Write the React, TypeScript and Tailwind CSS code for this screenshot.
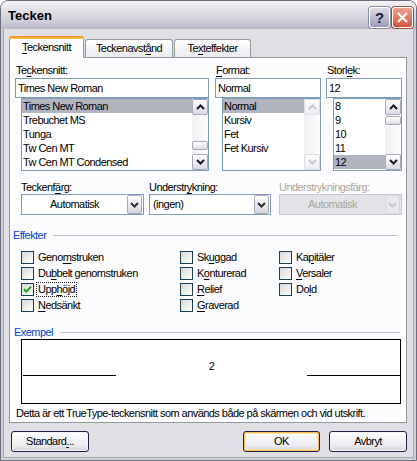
import React from "react";

const FONT = "font-['Liberation_Sans',Arial,sans-serif]";

function U({ c }: { c: string }) {
  return <span className="underline underline-offset-[2px] decoration-[1px]">{c}</span>;
}

function Chev({ up, color = "#1a1a2a" }: { up?: boolean; color?: string }) {
  return (
    <svg width="9" height="6" viewBox="0 0 9 6">
      <path
        d={up ? "M1 5 L4.5 1.5 L8 5" : "M1 1 L4.5 4.5 L8 1"}
        fill="none"
        stroke={color}
        strokeWidth="2"
      />
    </svg>
  );
}

function SBtn({ up, disabled }: { up?: boolean; disabled?: boolean }) {
  return (
    <div
      className={`h-[16px] w-[16px] shrink-0 rounded-[2px] border flex items-center justify-center ${
        disabled
          ? "border-[#dcdce2] bg-[linear-gradient(to_bottom,#fbfbfc,#eeeef2)]"
          : "border-[#a9a9bb] bg-[linear-gradient(to_bottom,#ffffff,#dadae4)]"
      }`}
    >
      <Chev up={up} color={disabled ? "#c6c6d0" : "#1a1a2a"} />
    </div>
  );
}

function Scroll({ thumbTop, disabled }: { thumbTop?: number; disabled?: boolean }) {
  return (
    <div className="w-[16px] h-full flex flex-col bg-[linear-gradient(to_right,#f1f1f4,#fcfcfe)]">
      <SBtn up disabled={disabled} />
      {thumbTop !== undefined ? (
        <>
          <div style={{ height: thumbTop }} />
          <div className="h-[9px] w-[16px] rounded-[2px] border border-[#a9a9bb] bg-[linear-gradient(to_bottom,#ffffff,#dcdce6)]" />
        </>
      ) : null}
      <div className="flex-1" />
      <SBtn disabled={disabled} />
    </div>
  );
}

function ListBox({
  items,
  sel,
  thumbTop,
  disabled,
}: {
  items: string[];
  sel: number;
  thumbTop?: number;
  disabled?: boolean;
}) {
  return (
    <div className="h-[73px] border border-[#7f9db9] bg-white flex p-0">
      <div className="flex-1 flex flex-col overflow-hidden">
        {items.map((it, i) => (
          <div
            key={it}
            className={`h-[14px] leading-[14px] pl-[1px] whitespace-nowrap ${
              i === sel ? "bg-[#b2b4bf]" : ""
            }`}
          >
            {it}
          </div>
        ))}
      </div>
      <Scroll thumbTop={thumbTop} disabled={disabled} />
    </div>
  );
}

function Combo({
  text,
  center,
  disabled,
}: {
  text: string;
  center?: boolean;
  disabled?: boolean;
}) {
  return (
    <div
      className={`h-[21px] border flex items-center ${
        disabled
          ? "border-[#c9c7d0] bg-[#e4e3e8] text-[#aca899]"
          : "border-[#7f9db9] bg-white"
      }`}
    >
      <span className={`flex-1 px-[3px] whitespace-nowrap ${center ? "text-center" : ""}`}>
        {text}
      </span>
      <div
        className={`h-[19px] w-[15px] mr-px rounded-[2px] border flex items-center justify-center ${
          disabled
            ? "border-[#d8d8de] bg-[#e8e8ec]"
            : "border-[#a9a9bb] bg-[linear-gradient(to_bottom,#ffffff,#d4d4de)]"
        }`}
      >
        <Chev color={disabled ? "#c8c8d0" : "#2a2a3a"} />
      </div>
    </div>
  );
}

function Check({
  children,
  checked,
  focus,
}: {
  children: React.ReactNode;
  checked?: boolean;
  focus?: boolean;
}) {
  return (
    <div className="h-[16px] flex items-center">
      <span className="w-[13px] h-[13px] shrink-0 border border-[#1c3f5a] bg-[linear-gradient(135deg,#d8d8d4,#ffffff)] flex items-center justify-center">
        {checked ? (
          <svg width="9" height="9" viewBox="0 0 9 9">
            <path d="M1 4.2 L3.3 6.6 L8 1.8" fill="none" stroke="#21a121" strokeWidth="2" />
          </svg>
        ) : null}
      </span>
      <span
        className={`ml-[2px] leading-[13px] px-[1px] whitespace-nowrap border ${
          focus ? "border-dotted border-[#222]" : "border-transparent"
        }`}
      >
        {children}
      </span>
    </div>
  );
}

function Btn({ children, def, w }: { children: React.ReactNode; def?: boolean; w: string }) {
  return (
    <div
      className={`${w} h-[21px] rounded-[3px] border border-[#20204a] bg-[linear-gradient(to_bottom,#ffffff,#ececf0_70%,#d2d2dc)] flex items-center justify-center ${
        def ? "shadow-[inset_0_0_0_1px_#f7c05a,inset_0_0_0_2px_#fde6a6]" : "shadow-[inset_0_0_0_1px_#f4f4f8]"
      }`}
    >
      {children}
    </div>
  );
}

export default function App() {
  return (
    <div className={`w-[417px] h-[461px] bg-white text-[11px] text-black tracking-[-0.55px] ${FONT}`}>
      <div className="w-[417px] h-[461px] rounded-t-[8px] border border-[#6e6e82] bg-[#cfcfd9] flex flex-col overflow-hidden">
        {/* Title bar */}
        <div className="h-[28px] shrink-0 flex items-center bg-[linear-gradient(to_bottom,#f4f4f6_0%,#e2e2e8_30%,#d0d0da_70%,#b8b8c8_100%)]">
          <span className="ml-[7px] mt-[2px] text-[13px] font-bold tracking-[0px]">Tecken</span>
          <div className="flex-1" />
          <div className="w-[21px] h-[21px] mt-[4px] rounded-[3px] border border-white bg-[linear-gradient(to_bottom,#dcdce8,#9a9ab6)] flex items-center justify-center shadow-[0_0_0_1px_#8a8aa0]">
            <span className="text-[15px] font-bold text-[#1a1a3a] leading-none tracking-[0px]">?</span>
          </div>
          <div className="w-[21px] h-[21px] mt-[4px] ml-[2px] mr-[3px] rounded-[3px] border border-white bg-[linear-gradient(to_bottom,#f0a392,#d2523f)] flex items-center justify-center shadow-[0_0_0_1px_#a04a40]">
            <svg width="13" height="13" viewBox="0 0 13 13">
              <path d="M2 2 L11 11 M11 2 L2 11" stroke="#ffffff" strokeWidth="2.2" />
            </svg>
          </div>
        </div>

        {/* Body */}
        <div className="flex-1 mx-[2px] mb-[2px] border-x border-b border-[#a8a8b8] bg-[#e0dfe3] flex flex-col">
          {/* Tabs */}
          <div className="mt-[7px] ml-[5px] h-[21px] flex items-end relative z-10">
            <div className="w-[75px] h-[22px] mb-[-1px] rounded-t-[3px] border-x border-[#919b9c] bg-[#fcfcfe] flex flex-col">
              <div className="h-[3px] rounded-t-[3px] bg-[linear-gradient(to_bottom,#e68b2c,#ffc73c)] -mx-px" />
              <div className="flex-1 flex items-center justify-center pb-[3px]">
                <span>
                  <U c="T" />
                  eckensnitt
                </span>
              </div>
            </div>
            <div className="w-[88px] h-[18px] ml-px rounded-t-[3px] border border-b-0 border-[#919b9c] bg-[linear-gradient(to_bottom,#ffffff,#ebebf0)] flex items-center justify-center">
              <span>
                Teckenavst
                <U c="å" />
                nd
              </span>
            </div>
            <div className="w-[77px] h-[18px] ml-[1px] rounded-t-[3px] border border-b-0 border-[#919b9c] bg-[linear-gradient(to_bottom,#ffffff,#ebebf0)] flex items-center justify-center">
              <span>
                Te
                <U c="x" />
                teffekter
              </span>
            </div>
          </div>

          {/* Panel */}
          <div className="ml-[5px] w-[398px] h-[366px] shrink-0 border border-[#919b9c] bg-[#fcfcfe] flex flex-col">
            {/* Font/format/size */}
            <div className="mt-[6px] pl-[5px] flex">
              <div className="w-[194px] flex flex-col">
                <div className="h-[13px] leading-[13px] pl-[1px]">
                  Te
                  <U c="c" />
                  kensnitt:
                </div>
                <div className="mt-[1px] h-[20px] border border-[#7f9db9] bg-white flex items-center pl-[2px]">
                  Times New Roman
                </div>
                <div className="ml-[6px]">
                  <ListBox
                    items={["Times New Roman", "Trebuchet MS", "Tunga", "Tw Cen MT", "Tw Cen MT Condensed"]}
                    sel={0}
                    thumbTop={26}
                  />
                </div>
              </div>
              <div className="w-[106px] ml-[6px] flex flex-col">
                <div className="h-[13px] leading-[13px] pl-[1px]">
                  <U c="F" />
                  ormat:
                </div>
                <div className="mt-[1px] h-[20px] border border-[#7f9db9] bg-white flex items-center pl-[2px]">
                  Normal
                </div>
                <div className="ml-[7px]">
                  <ListBox items={["Normal", "Kursiv", "Fet", "Fet Kursiv"]} sel={0} disabled />
                </div>
              </div>
              <div className="w-[76px] ml-[5px] flex flex-col">
                <div className="h-[13px] leading-[13px] pl-[1px]">
                  Storl
                  <U c="e" />
                  k:
                </div>
                <div className="mt-[1px] h-[20px] border border-[#7f9db9] bg-white flex items-center pl-[2px]">
                  12
                </div>
                <div className="ml-[7px]">
                  <ListBox items={["8", "9", "10", "11", "12"]} sel={4} thumbTop={1} />
                </div>
              </div>
            </div>

            {/* Colors / underline */}
            <div className="mt-[10px] pl-[11px] flex">
              <div className="w-[123px] flex flex-col">
                <div className="h-[13px] leading-[13px]">
                  Teckenf
                  <U c="ä" />
                  rg:
                </div>
                <Combo text="Automatisk" center />
              </div>
              <div className="w-[122px] ml-[5px] flex flex-col">
                <div className="h-[13px] leading-[13px]">
                  Understr
                  <U c="y" />
                  kning:
                </div>
                <Combo text="(ingen)" />
              </div>
              <div className="w-[123px] ml-[8px] flex flex-col">
                <div className="h-[13px] leading-[13px] text-[#aca899]">Understrykningsfärg:</div>
                <Combo text="Automatisk" center disabled />
              </div>
            </div>

            {/* Effekter */}
            <div className="mt-[14px] pl-[3px] pr-[8px] flex items-center h-[13px]">
              <span className="text-[#0046d5] leading-[13px]">Effekter</span>
              <div className="flex-1 ml-[7px] h-px bg-[#c0c0c8]" />
            </div>
            <div className="mt-[7px] pl-[11px] flex">
              <div className="w-[159px] flex flex-col">
                <Check>
                  Geno<U c="m" />struken
                </Check>
                <Check>
                  Du<U c="b" />belt genomstruken
                </Check>
                <Check checked focus>
                  Upp<U c="h" />öjd
                </Check>
                <Check>
                  <U c="N" />edsänkt
                </Check>
              </div>
              <div className="w-[99px] flex flex-col">
                <Check>
                  Sk<U c="u" />ggad
                </Check>
                <Check>
                  K<U c="o" />nturerad
                </Check>
                <Check>
                  <U c="R" />elief
                </Check>
                <Check>
                  <U c="G" />raverad
                </Check>
              </div>
              <div className="flex flex-col">
                <Check>
                  Ka<U c="p" />itäler
                </Check>
                <Check>
                  <U c="V" />ersaler
                </Check>
                <Check>
                  Do<U c="l" />d
                </Check>
              </div>
            </div>

            {/* Exempel */}
            <div className="mt-[13px] pl-[4px] pr-[6px] flex items-center h-[12px]">
              <span className="text-[#0046d5] leading-[12px]">Exempel</span>
              <div className="flex-1 ml-[7px] h-px bg-[#c0c0c8]" />
            </div>
            <div className="mt-[1px] ml-[11px] w-[380px] h-[65px] border border-black bg-white flex flex-col">
              <div className="mt-[20px] h-[16px] flex items-end">
                <div className="ml-px w-[93px] h-px bg-black" />
                <div className="flex-1 text-center leading-[13px] mb-[3px]">2</div>
                <div className="w-[93px] h-px bg-black" />
              </div>
            </div>
            <div className="mt-[3px] pl-[6px] h-[13px] leading-[13px] whitespace-nowrap">
              Detta är ett TrueType-teckensnitt som används både på skärmen och vid utskrift.
            </div>
          </div>

          {/* Buttons */}
          <div className="mt-[8px] flex">
            <div className="ml-[7px]">
              <Btn w="w-[78px]">
                <span>
                  Standard<U c="." />..
                </span>
              </Btn>
            </div>
            <div className="flex-1" />
            <Btn w="w-[77px]" def>
              OK
            </Btn>
            <div className="ml-[9px] mr-[6px]">
              <Btn w="w-[78px]">Avbryt</Btn>
            </div>
          </div>
        </div>
      </div>
    </div>
  );
}
